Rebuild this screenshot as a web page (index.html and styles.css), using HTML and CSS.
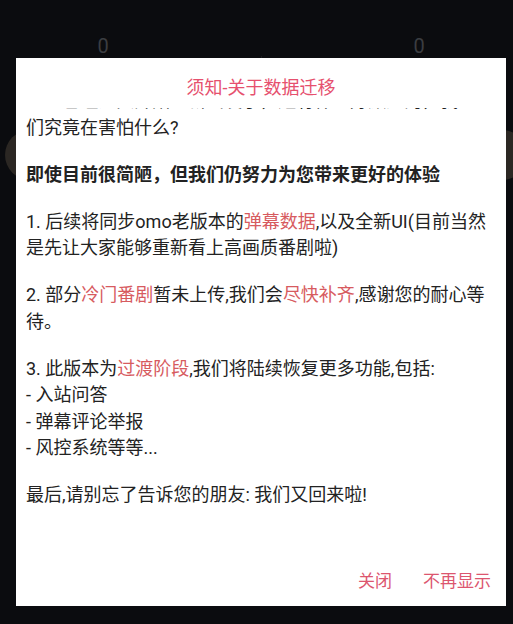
FILE: index.html
```html
<!DOCTYPE html>
<html lang="zh-CN">
<head>
<meta charset="utf-8">
<title>须知-关于数据迁移</title>
<link rel="stylesheet" href="styles.css">
</head>
<body>
<div class="page">
  <div class="stats">
    <div class="stat">0</div>
    <div class="stat-divider"></div>
    <div class="stat">0</div>
  </div>
  <div class="avatars">
    <div class="avatar"></div>
    <div class="avatar right"></div>
  </div>
</div>

<div class="dialog">
  <div class="dialog-title">须知-关于数据迁移</div>
  <div class="dialog-body">
    <p class="para first"><span class="nowrap">omo已经从头开始重新出发了，还有什么好顾虑的，我</span><br>们究竟在害怕什么?</p>
    <p class="para bold">即使目前很简陋，但我们仍努力为您带来更好的体验</p>
    <p class="para">1. 后续将同步omo老版本的<span class="hl">弹幕数据</span>,以及全新UI(目前当然是先让大家能够重新看上高画质番剧啦)</p>
    <p class="para">2. 部分<span class="hl">冷门番剧</span>暂未上传,我们会<span class="hl">尽快补齐</span>,感谢您的耐心等待。</p>
    <p class="para">3. 此版本为<span class="hl">过渡阶段</span>,我们将陆续恢复更多功能,包括:<br>- 入站问答<br>- 弹幕评论举报<br>- 风控系统等等...</p>
    <p class="para">最后,请别忘了告诉您的朋友: 我们又回来啦!</p>
  </div>
  <div class="dialog-actions">
    <span class="action">关闭</span>
    <span class="action">不再显示</span>
  </div>
</div>
</body>
</html>
```

FILE: styles.css
```css
html, body {
  margin: 0;
  padding: 0;
}

body {
  background: #0b0c0f;
  width: 513px;
  height: 624px;
  overflow: hidden;
  font-family: Roboto, "Noto Sans CJK SC", sans-serif;
}

.page {
  display: flex;
  flex-direction: column;
}

.stats {
  display: flex;
  align-items: flex-end;
  gap: 137.5px;
  padding: 34px 0 0 83px;
  height: 24px;
}

.stat {
  width: 40px;
  text-align: center;
  color: #3b3d41;
  font-size: 20px;
  line-height: 24px;
}

.stat-divider {
  width: 1px;
  height: 6px;
  background: #1a1b1e;
  margin-bottom: -4px;
}

.avatars {
  display: flex;
  justify-content: space-between;
  margin: 72px -14px 0 5px;
}

.avatar {
  width: 50px;
  height: 50px;
  border-radius: 50%;
  background: #2b2723;
}

.dialog {
  position: fixed;
  left: 16px;
  top: 58px;
  width: 490px;
  height: 548px;
  background: #ffffff;
  display: flex;
  flex-direction: column;
}

.dialog-title {
  height: 50px;
  flex: none;
  display: flex;
  align-items: center;
  justify-content: center;
  padding-top: 5px;
  box-sizing: border-box;
  color: #e6506e;
  font-size: 18px;
}

.dialog-body {
  flex: 1;
  overflow: hidden;
  padding: 0 13px 0 10px;
  color: #222222;
  font-size: 18px;
  line-height: 26.5px;
}

.para {
  margin: 0 0 20.5px;
}

.para.first {
  margin-top: -20px;
}

.nowrap {
  white-space: nowrap;
}

.para.bold {
  font-weight: 700;
}

.hl {
  color: #d75b5f;
}

.dialog-actions {
  flex: none;
  height: 54px;
  display: flex;
  align-items: center;
  justify-content: flex-end;
  gap: 31px;
  padding: 0 15px 0 0;
  box-sizing: border-box;
}

.action {
  color: #dc566f;
  font-size: 17px;
}
```
